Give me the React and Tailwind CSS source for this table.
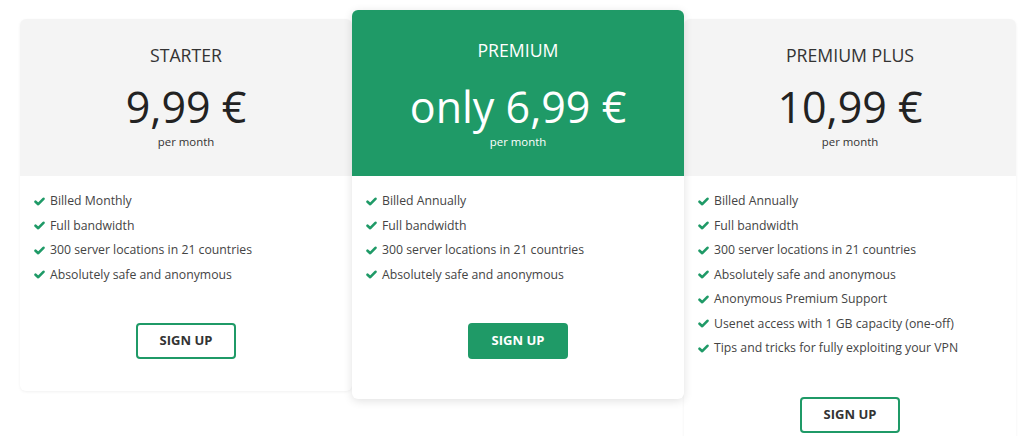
import React from "react";

const font = { fontFamily: '"Open Sans", "Noto Sans", sans-serif' };

function Check() {
  return (
    <svg viewBox="0 0 12 10" className="w-[11px] h-[9px] mr-[5px] shrink-0" aria-hidden="true">
      <polyline
        points="1.6,5.2 4.6,8 10.4,2"
        fill="none"
        stroke="#1f9a67"
        strokeWidth="2.9"
        strokeLinecap="round"
        strokeLinejoin="round"
      />
    </svg>
  );
}

function Feature({ children }) {
  return (
    <li className="flex items-center h-[24.5px] text-[12.25px] text-[#444]">
      <Check />
      <span>{children}</span>
    </li>
  );
}

function Card({ title, price, features, featured, bottomPad }) {
  return (
    <div
      className={
        featured
          ? "relative z-10 w-[332px] shrink-0 rounded-[6px] bg-white shadow-[0_2px_10px_rgba(0,0,0,0.12)] overflow-hidden"
          : "relative w-[332px] shrink-0 mt-[9px] rounded-[6px] bg-white shadow-[0_1px_3px_rgba(0,0,0,0.06)] overflow-hidden"
      }
    >
      <div
        className={
          featured
            ? "bg-[#1f9a67] text-white flex flex-col items-center pt-[28px] h-[166px]"
            : "bg-[#f4f4f4] flex flex-col items-center pt-[24px] h-[157px]"
        }
      >
        <div className={featured ? "text-[17.7px] leading-[24px] text-white" : "text-[17.7px] leading-[24px] text-[#333]"}>
          {title}
        </div>
        <div
          className={
            featured
              ? "mt-[20px] text-[43px] leading-[50px] text-white"
              : "mt-[15px] text-[43px] leading-[50px] text-[#222]"
          }
        >
          {price}
        </div>
        <div
          className={
            featured
              ? "mt-[2px] text-[11.4px] leading-[15px] text-white"
              : "mt-[2px] text-[11.4px] leading-[15px] text-[#333]"
          }
        >
          per month
        </div>
      </div>
      <ul className="pt-[13px] pl-[14px]">
        {features.map((f) => (
          <Feature key={f}>{f}</Feature>
        ))}
      </ul>
      <div className={"flex justify-center mt-[36px] " + bottomPad}>
        <button
          className={
            featured
              ? "w-[100px] h-[36px] rounded-[4px] bg-[#1f9a67] text-white text-[13px] font-bold"
              : "w-[100px] h-[36px] rounded-[4px] border-2 border-[#1f9a67] bg-white text-[#333] text-[13px] font-bold"
          }
          style={font}
        >
          SIGN UP
        </button>
      </div>
    </div>
  );
}

export default function App() {
  const base = [
    "Full bandwidth",
    "300 server locations in 21 countries",
    "Absolutely safe and anonymous",
  ];
  return (
    <div className="w-[1024px] h-[436px] bg-white overflow-hidden" style={font}>
      <div className="flex items-start pt-[10px] pl-[20px]">
        <Card
          title="STARTER"
          price="9,99 €"
          features={["Billed Monthly", ...base]}
          bottomPad="pb-[32px]"
        />
        <Card
          title="PREMIUM"
          price="only 6,99 €"
          featured
          features={["Billed Annually", ...base]}
          bottomPad="pb-[40px]"
        />
        <Card
          title="PREMIUM PLUS"
          price="10,99 €"
          features={[
            "Billed Annually",
            ...base,
            "Anonymous Premium Support",
            "Usenet access with 1 GB capacity (one-off)",
            "Tips and tricks for fully exploiting your VPN",
          ]}
          bottomPad="pb-[32px]"
        />
      </div>
    </div>
  );
}
